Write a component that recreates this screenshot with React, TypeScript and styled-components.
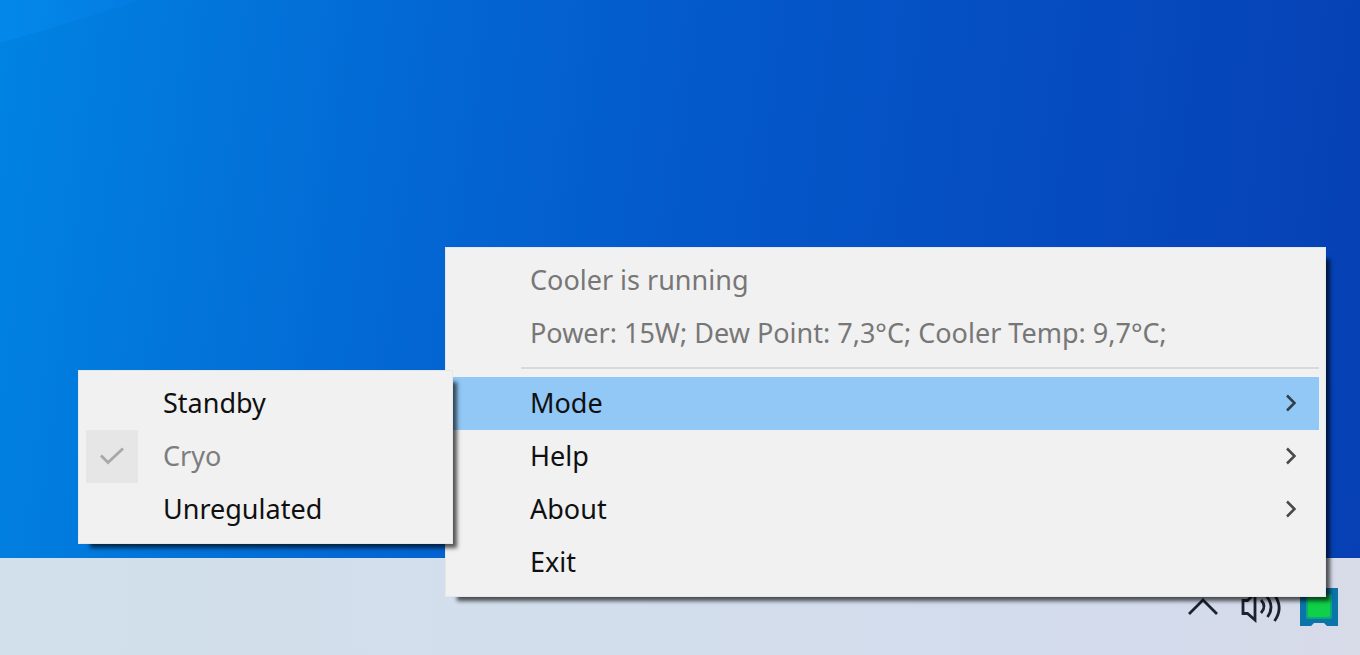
import React from "react";
import styled, { createGlobalStyle } from "styled-components";

const GlobalStyle = createGlobalStyle`
  *, *::before, *::after { box-sizing: border-box; }
  body {
    margin: 0;
    font-family: "Noto Sans", "Open Sans", sans-serif;
    font-size: 27px;
    line-height: 36px;
    color: #101010;
  }
`;

const Desktop = styled.div`
  display: flex;
  flex-direction: column;
  min-height: 100vh;
  overflow: hidden;
`;

const Wallpaper = styled.main`
  flex: 1;
  background: linear-gradient(
    97deg,
    #0083e2 0%,
    #0276db 14%,
    #0366d2 32%,
    #0459ca 50%,
    #054cc0 75%,
    #0640b4 100%
  );
`;

const LightBeam = styled.svg`
  display: block;
  width: 140px;
  height: 44px;
`;

const Taskbar = styled.footer`
  position: relative;
  display: flex;
  align-items: center;
  justify-content: flex-end;
  height: 97px;
  padding-right: 22px;
  background: linear-gradient(90deg, #d1e0eb 0%, #d3deec 45%, #d3dbec 85%, #d8dbe8 100%);
`;

const TrayButton = styled.button<{ $gap?: number }>`
  display: flex;
  padding: 0;
  margin-left: ${(p) => p.$gap ?? 0}px;
  border: 0;
  background: none;
  color: #1b2230;
`;

const MenuPanel = styled.ul`
  position: absolute;
  margin: 0;
  padding: 6px 6px 7px 7px;
  list-style: none;
  background: #f1f1f1;
  border: 1px solid #e4e8ec;
  box-shadow: 8px 8px 4px -4px rgba(0, 0, 0, 0.65);
`;

const ContextMenu = styled(MenuPanel)`
  right: 34px;
  bottom: 58px;
  min-width: 881px;
`;

const Submenu = styled(MenuPanel)`
  top: -7px;
  right: 100%;
  min-width: 375px;
`;

const Entry = styled.li`
  position: relative;
`;

const MenuItem = styled.button<{ $active?: boolean }>`
  display: flex;
  align-items: center;
  justify-content: space-between;
  width: 100%;
  height: 53px;
  padding: 0 21px 2px 77px;
  border: 0;
  font: inherit;
  text-align: left;
  white-space: nowrap;
  color: inherit;
  background: ${(p) => (p.$active ? "#91c8f6" : "transparent")};

  &:disabled {
    color: #777777;
  }
`;

const CheckItem = styled.label`
  display: flex;
  align-items: center;
  gap: 25px;
  height: 53px;
  color: #7d7d7d;
`;

const CheckSlot = styled.span`
  display: grid;
  place-items: center;
  width: 52px;
  height: 53px;
  background: #e6e6e6;

  > * {
    grid-area: 1 / 1;
  }
`;

const CheckText = styled.span`
  padding-bottom: 2px;
`;

const CheckInput = styled.input`
  appearance: none;
  width: 100%;
  height: 100%;
  margin: 0;
`;

const Separator = styled.li`
  height: 17px;
  padding: 7px 0 0 68px;

  &::before {
    content: "";
    display: block;
    height: 2px;
    background: #d9d9d9;
  }
`;

const Chevron = () => (
  <svg width="13" height="20" viewBox="0 0 13 20" fill="none" aria-hidden="true">
    <path d="M2 2.500 9.500 10 2 17.500" stroke="currentColor" strokeOpacity="0.75" strokeWidth="2.500" />
  </svg>
);

const CheckMark = () => (
  <svg width="26" height="20" viewBox="0 0 26 20" fill="none" aria-hidden="true">
    <path d="M2 8.500 9 15.500 24 1.500" stroke="#a8a8a8" strokeWidth="2.800" />
  </svg>
);

const CaretUp = () => (
  <svg width="32" height="20" viewBox="0 0 32 20" fill="none" aria-hidden="true">
    <path d="M2 17 16 3 30 17" stroke="currentColor" strokeWidth="2.800" />
  </svg>
);

const Speaker = () => (
  <svg width="42" height="32" viewBox="0 0 42 32" fill="none" stroke="currentColor" strokeWidth="2.800" aria-hidden="true">
    <path d="M3 9.500H7.500L15 2V29L7.500 22.500H3Z" />
    <path d="M21 9Q27 15.500 21 22" />
    <path d="M26.500 5Q35 15.500 27.500 26" />
    <path d="M33 2Q44.500 16 34.500 30" />
  </svg>
);

const CoolerIcon = () => (
  <svg width="38" height="40" viewBox="0 0 38 40" aria-hidden="true">
    <path d="M0 1H38V39H27L24 36H14L11 39H0Z" fill="#0c75a8" />
    <rect x="6" y="7" width="26" height="25" rx="2" fill="#0aa780" />
    <rect x="8" y="9" width="22" height="21" rx="2" fill="#10cf48" />
  </svg>
);

export default function App() {
  return (
    <Desktop>
      <GlobalStyle />
      <Wallpaper>
        <LightBeam viewBox="0 0 140 44" aria-hidden="true">
          <defs>
            <linearGradient id="beam" x1="0" y1="0" x2="1" y2="0">
              <stop offset="0" stopColor="#058cf0" stopOpacity="0.6" />
              <stop offset="1" stopColor="#0a80ea" stopOpacity="0.3" />
            </linearGradient>
          </defs>
          <path d="M0 0H140Q60 26 0 43Z" fill="url(#beam)" />
        </LightBeam>
      </Wallpaper>
      <Taskbar>
        <TrayButton aria-label="Show hidden icons">
          <CaretUp />
        </TrayButton>
        <TrayButton $gap={21} aria-label="Volume">
          <Speaker />
        </TrayButton>
        <TrayButton $gap={18} aria-label="Cooler">
          <CoolerIcon />
        </TrayButton>
        <ContextMenu>
          <Entry>
            <MenuItem disabled>Cooler is running</MenuItem>
          </Entry>
          <Entry>
            <MenuItem disabled>Power: 15W; Dew Point: 7,3°C; Cooler Temp: 9,7°C;</MenuItem>
          </Entry>
          <Separator role="separator" />
          <Entry>
            <MenuItem $active aria-haspopup="true" aria-expanded="true">
              Mode
              <Chevron />
            </MenuItem>
            <Submenu>
              <Entry>
                <MenuItem>Standby</MenuItem>
              </Entry>
              <Entry>
                <CheckItem>
                  <CheckSlot>
                    <CheckInput type="checkbox" defaultChecked disabled />
                    <CheckMark />
                  </CheckSlot>
                  <CheckText>Cryo</CheckText>
                </CheckItem>
              </Entry>
              <Entry>
                <MenuItem>Unregulated</MenuItem>
              </Entry>
            </Submenu>
          </Entry>
          <Entry>
            <MenuItem aria-haspopup="true">
              Help
              <Chevron />
            </MenuItem>
          </Entry>
          <Entry>
            <MenuItem aria-haspopup="true">
              About
              <Chevron />
            </MenuItem>
          </Entry>
          <Entry>
            <MenuItem>Exit</MenuItem>
          </Entry>
        </ContextMenu>
      </Taskbar>
    </Desktop>
  );
}
